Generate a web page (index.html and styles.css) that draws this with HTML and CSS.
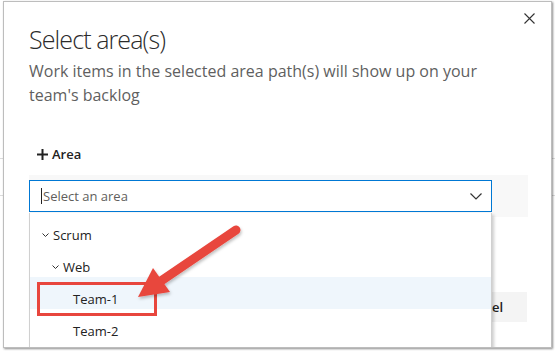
FILE: index.html
```html
<!DOCTYPE html>
<html lang="en">
<head>
  <meta charset="UTF-8">
  <meta name="viewport" content="width=device-width, initial-scale=1.0">
  <title>Select area(s)</title>
  <link rel="stylesheet" href="styles.css">
</head>
<body>
  <div class="page">
    <div class="dialog">
      <div class="header">
        <div class="heading">
          <h1 class="title">Select area(s)</h1>
          <p class="subtitle">Work items in the selected area path(s) will show up on your team's backlog</p>
        </div>
        <button class="close" aria-label="Close">
          <svg width="11" height="11" viewBox="0 0 11 11">
            <path d="M0.5 0.5 L10.5 10.5 M10.5 0.5 L0.5 10.5" stroke="#333" stroke-width="1.1" fill="none"/>
          </svg>
        </button>
      </div>

      <div class="content">
        <button class="add-area">
          <svg class="plus" width="11" height="11" viewBox="0 0 11 11">
            <path d="M5.5 0 V11 M0 5.5 H11" stroke="#222" stroke-width="2" fill="none"/>
          </svg>
          Area
        </button>

        <div class="area-row">
          <div class="picker">
            <div class="picker-input">
              <span class="caret"></span>
              <span class="placeholder">Select an area</span>
              <svg class="chevron" width="12" height="7" viewBox="0 0 12 7">
                <polyline points="0.5,0.5 6,6 11.5,0.5" stroke="#333" stroke-width="1.2" fill="none"/>
              </svg>
            </div>
            <ul class="picker-menu">
              <li class="node level-0">
                <svg class="twisty" width="7" height="4" viewBox="0 0 7 4"><polyline points="0.5,0.5 3.5,3.5 6.5,0.5" stroke="#333" stroke-width="1" fill="none"/></svg>
                Scrum
              </li>
              <li class="node level-1">
                <svg class="twisty" width="7" height="4" viewBox="0 0 7 4"><polyline points="0.5,0.5 3.5,3.5 6.5,0.5" stroke="#333" stroke-width="1" fill="none"/></svg>
                Web
              </li>
              <li class="node level-2 hover"><span class="twisty-space"></span>Team-1</li>
              <li class="node level-2"><span class="twisty-space"></span>Team-2</li>
            </ul>
          </div>
        </div>

        <div class="footer">
          <button class="btn primary">Save</button>
          <button class="btn">Cancel</button>
        </div>
      </div>
    </div>

    <!-- callout drawn over the screenshot -->
    <svg class="annotation" width="555" height="351" viewBox="0 0 555 351">
      <defs>
        <filter id="shadow" x="-20%" y="-20%" width="140%" height="140%">
          <feDropShadow dx="1" dy="2" stdDeviation="1.5" flood-color="#000" flood-opacity="0.25"/>
        </filter>
      </defs>
      <rect x="38.5" y="283.5" width="117" height="31" fill="none" stroke="#e8463d" stroke-width="3"/>
      <g filter="url(#shadow)" fill="#e8463d">
        <line x1="236" y1="230" x2="158" y2="283" stroke="#e8463d" stroke-width="9" stroke-linecap="round"/>
        <polygon points="138,297 153,268 170,292"/>
      </g>
    </svg>
  </div>
</body>
</html>
```

FILE: styles.css
```css
* {
  box-sizing: border-box;
}

body {
  margin: 0;
  width: 555px;
  height: 351px;
  overflow: hidden;
  font-family: "Open Sans", "Segoe UI", sans-serif;
  color: #323130;
  background-color: #fff;
  /* rows of the page behind the dialog, only the edges show */
  background-image:
    linear-gradient(#dcdcdc, #dcdcdc), linear-gradient(#dcdcdc, #dcdcdc),
    linear-gradient(#dcdcdc, #dcdcdc), linear-gradient(#dcdcdc, #dcdcdc);
  background-size: 3px 1px;
  background-position: 0 158px, 0 195px, right 0 top 158px, right 0 top 195px;
  background-repeat: no-repeat;
}

.page {
  position: relative;
  height: 351px;
  padding: 1px 0 0 3px;
}

.dialog {
  width: 549px;
  height: 347px;
  background: #fff;
  border: 1px solid #bdbdbd;
  box-shadow: 1px 1px 2px rgba(0, 0, 0, 0.45);
  overflow: hidden;
}

.header {
  display: flex;
  align-items: flex-start;
  padding: 0 6px 0 25px;
}

.heading {
  flex: 1;
  padding-top: 19px;
}

.title {
  margin: 0;
  font-size: 25px;
  font-weight: 300;
  line-height: 36px;
  letter-spacing: -0.9px;
  color: #2b2b2b;
}

.subtitle {
  margin: 2px 0 0;
  font-size: 16px;
  line-height: 24px;
  color: #5f5f5f;
}

.close {
  width: 32px;
  height: 32px;
  padding: 0;
  border: none;
  background: none;
  display: flex;
  align-items: center;
  justify-content: center;
}

.content {
  padding: 0 23px 0 25px;
}

.add-area {
  display: flex;
  align-items: center;
  height: 32px;
  margin-top: 31px;
  padding: 0 7px 0 8px;
  border: none;
  background: none;
  font-family: inherit;
  font-size: 13px;
  font-weight: 600;
  line-height: 20px;
  color: #222;
}

.plus {
  margin-right: 4px;
}

.area-row {
  margin-top: 5px;
  padding: 5px 36px 5px 0;
  background: #f8f8f8;
}

.picker {
  position: relative;
}

.picker-input {
  display: flex;
  align-items: center;
  height: 32px;
  padding: 0 9px 0 11px;
  border: 1px solid #0078d4;
  background: #fff;
  font-size: 13px;
}

.caret {
  width: 1px;
  height: 16px;
  background: #222;
}

.placeholder {
  flex: 1;
  padding-left: 1px;
  color: #605e5c;
}

.picker-menu {
  position: absolute;
  top: 100%;
  left: 0;
  right: 0;
  z-index: 2;
  height: 160px;
  margin: 1px 0 0;
  padding: 0;
  list-style: none;
  background: #fff;
  border: 1px solid #d0d0d0;
  border-top: none;
  box-shadow: 2px 2px 3px rgba(0, 0, 0, 0.2);
}

.node {
  display: flex;
  align-items: center;
  height: 32px;
  padding-top: 12px;
  font-size: 13px;
  line-height: 20px;
  color: #222;
}

.node.hover {
  background: #eff6fc;
}

.level-0 { padding-left: 12px; }
.level-1 { padding-left: 22px; }
.level-2 { padding-left: 32px; }

.twisty,
.twisty-space {
  width: 11px;
  flex: none;
  padding-right: 4px;
}

.footer {
  display: flex;
  justify-content: flex-end;
  gap: 8px;
  margin-top: 75px;
  padding-right: 1px;
}

.btn {
  height: 30px;
  padding: 0 24px 0 20px;
  border: none;
  background: #f4f4f4;
  font-family: inherit;
  font-size: 13px;
  font-weight: 600;
  color: #222;
}

.btn.primary {
  background: #0078d4;
  color: #fff;
}

.annotation {
  position: absolute;
  top: 0;
  left: 0;
  z-index: 10;
  pointer-events: none;
}
```
